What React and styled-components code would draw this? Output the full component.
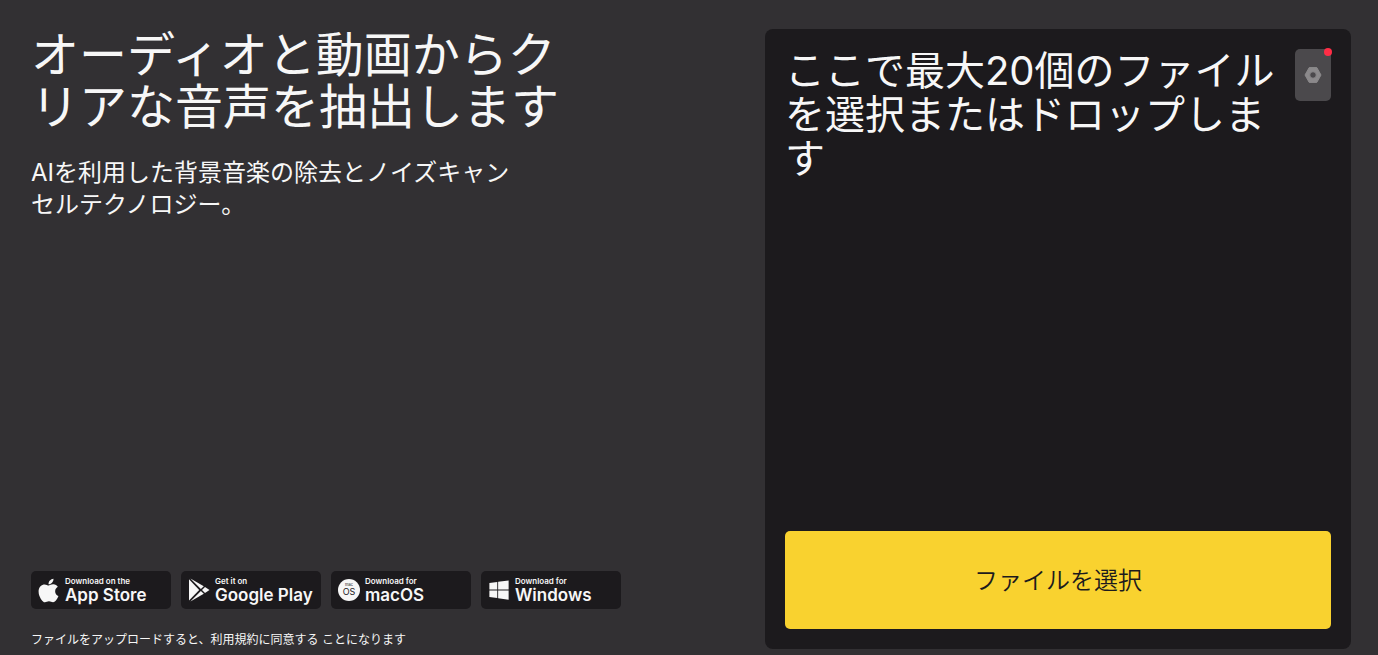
import React from 'react'
import styled, { createGlobalStyle } from 'styled-components'
import { FaApple, FaWindows } from 'react-icons/fa'

const GlobalStyle = createGlobalStyle`
  * {
    box-sizing: border-box;
  }
  body {
    margin: 0;
    background: #323033;
    color: #f7f7f7;
    font-family: Inter, "Noto Sans CJK JP", sans-serif;
  }
`

const Page = styled.main`
  display: grid;
  grid-template-columns: minmax(0, 1fr) 44.4%;
  min-height: 100vh;
  padding: 29px 27px 6px 31px;
`

const Intro = styled.section`
  display: flex;
  flex-direction: column;
  align-items: flex-start;
`

const Title = styled.h1`
  max-width: 560px;
  margin: 0 0 24px;
  font-size: 48px;
  font-weight: 400;
  line-height: 52px;
`

const Subtitle = styled.p`
  max-width: 490px;
  margin: 0;
  font-size: 24px;
  font-weight: 400;
  line-height: 32px;
`

const Stores = styled.nav`
  display: flex;
  flex-wrap: wrap;
  gap: 10px;
  margin-top: auto;
`

const StoreLink = styled.a`
  display: flex;
  align-items: center;
  gap: 4px;
  width: 140px;
  height: 38px;
  padding-left: 5px;
  border-radius: 5px;
  background: #1c1a1d;
  color: #f7f7f7;
  text-decoration: none;
  white-space: nowrap;
`

const StoreIcon = styled.span`
  display: flex;
  flex: none;
  align-items: center;
  justify-content: center;
  width: 25px;

  svg {
    flex: none;
    width: ${props => props.$size}px;
    height: ${props => props.$size}px;
  }
`

const StoreText = styled.span`
  display: flex;
  flex-direction: column;
`

const StoreHint = styled.span`
  font-size: 8px;
  font-weight: 600;
  line-height: 9px;
`

const StoreName = styled.span`
  font-size: 17px;
  font-weight: 600;
  line-height: 18px;
`

const Terms = styled.p`
  margin: 22px 0 0;
  font-size: 12px;
  line-height: 18px;

  a {
    color: inherit;
    text-decoration: none;
  }
`

const Panel = styled.section`
  display: flex;
  flex-direction: column;
  justify-content: space-between;
  padding: 20px;
  border-radius: 8px;
  background: #1c1a1d;
`

const PanelHead = styled.div`
  display: flex;
  align-items: flex-start;
  justify-content: space-between;
  gap: 16px;
`

const PanelTitle = styled.h2`
  margin: 0;
  font-size: 40px;
  font-weight: 400;
  line-height: 44px;
`

const SettingsButton = styled.button`
  position: relative;
  display: flex;
  flex: none;
  align-items: center;
  justify-content: center;
  width: 36px;
  height: 52px;
  padding: 0;
  border: 0;
  border-radius: 5px;
  background: #4b494c;
  cursor: pointer;
`

const Dot = styled.span`
  position: absolute;
  top: -1px;
  right: -1px;
  width: 8px;
  height: 8px;
  border-radius: 50%;
  background: #ff2d46;
`

const SelectButton = styled.button`
  height: 98px;
  padding: 0 0 4px;
  border: 0;
  border-radius: 5px;
  background: #f9d22f;
  color: #1c1a1d;
  font-family: inherit;
  font-size: 24px;
  font-weight: 350;
  cursor: pointer;
`

const PlayIcon = () => (
  <svg viewBox="0 0 24 24" fill="currentColor" aria-hidden="true">
    <path d="M2 1.2v21.4L12.2 12z" />
    <path d="M3.4.4l13.4 7.8-2.9 2.8z" />
    <path d="M3.4 23.6l13.4-7.8-2.9-2.8z" />
    <path d="M18 8.9l4.5 3.1-4.5 3.1-3-3.1z" />
  </svg>
)

const MacIcon = () => (
  <svg viewBox="0 0 24 24" aria-hidden="true">
    <circle cx="12" cy="12" r="11" fill="#f7f7f7" />
    <text x="12" y="8" textAnchor="middle" fontSize="4" fill="#1c1a1d">mac</text>
    <text x="12" y="17" textAnchor="middle" fontSize="9" fill="#1c1a1d">OS</text>
  </svg>
)

const NutIcon = () => (
  <svg width="20" height="20" viewBox="0 0 20 20" aria-hidden="true">
    <path
      d="M6.2 2.6h7.6L18 10l-4.2 7.4H6.2L2 10zM10 6.7a3.3 3.3 0 1 0 0 6.6 3.3 3.3 0 0 0 0-6.6z"
      fill="#8b898b"
      fillRule="evenodd"
      stroke="#8b898b"
      strokeWidth="1"
      strokeLinejoin="round"
    />
  </svg>
)

const stores = [
  { hint: 'Download on the', name: 'App Store', icon: <FaApple />, size: 27 },
  { hint: 'Get it on', name: 'Google Play', icon: <PlayIcon />, size: 24 },
  { hint: 'Download for', name: 'macOS', icon: <MacIcon />, size: 24 },
  { hint: 'Download for', name: 'Windows', icon: <FaWindows />, size: 22 },
]

export default function App() {
  return (
    <>
      <GlobalStyle />
      <Page lang="ja">
        <Intro>
          <Title>オーディオと動画からクリアな音声を抽出します</Title>
          <Subtitle>AIを利用した背景音楽の除去とノイズキャンセルテクノロジー。</Subtitle>
          <Stores>
            {stores.map(({ hint, name, icon, size }) => (
              <StoreLink href="#" key={name}>
                <StoreIcon $size={size}>{icon}</StoreIcon>
                <StoreText>
                  <StoreHint>{hint}</StoreHint>
                  <StoreName>{name}</StoreName>
                </StoreText>
              </StoreLink>
            ))}
          </Stores>
          <Terms>
            ファイルをアップロードすると、<a href="#">利用規約に同意する</a> ことになります
          </Terms>
        </Intro>
        <Panel>
          <PanelHead>
            <PanelTitle>ここで最大20個のファイルを選択またはドロップします</PanelTitle>
            <SettingsButton type="button" aria-label="設定">
              <NutIcon />
              <Dot />
            </SettingsButton>
          </PanelHead>
          <SelectButton type="button">ファイルを選択</SelectButton>
        </Panel>
      </Page>
    </>
  )
}
